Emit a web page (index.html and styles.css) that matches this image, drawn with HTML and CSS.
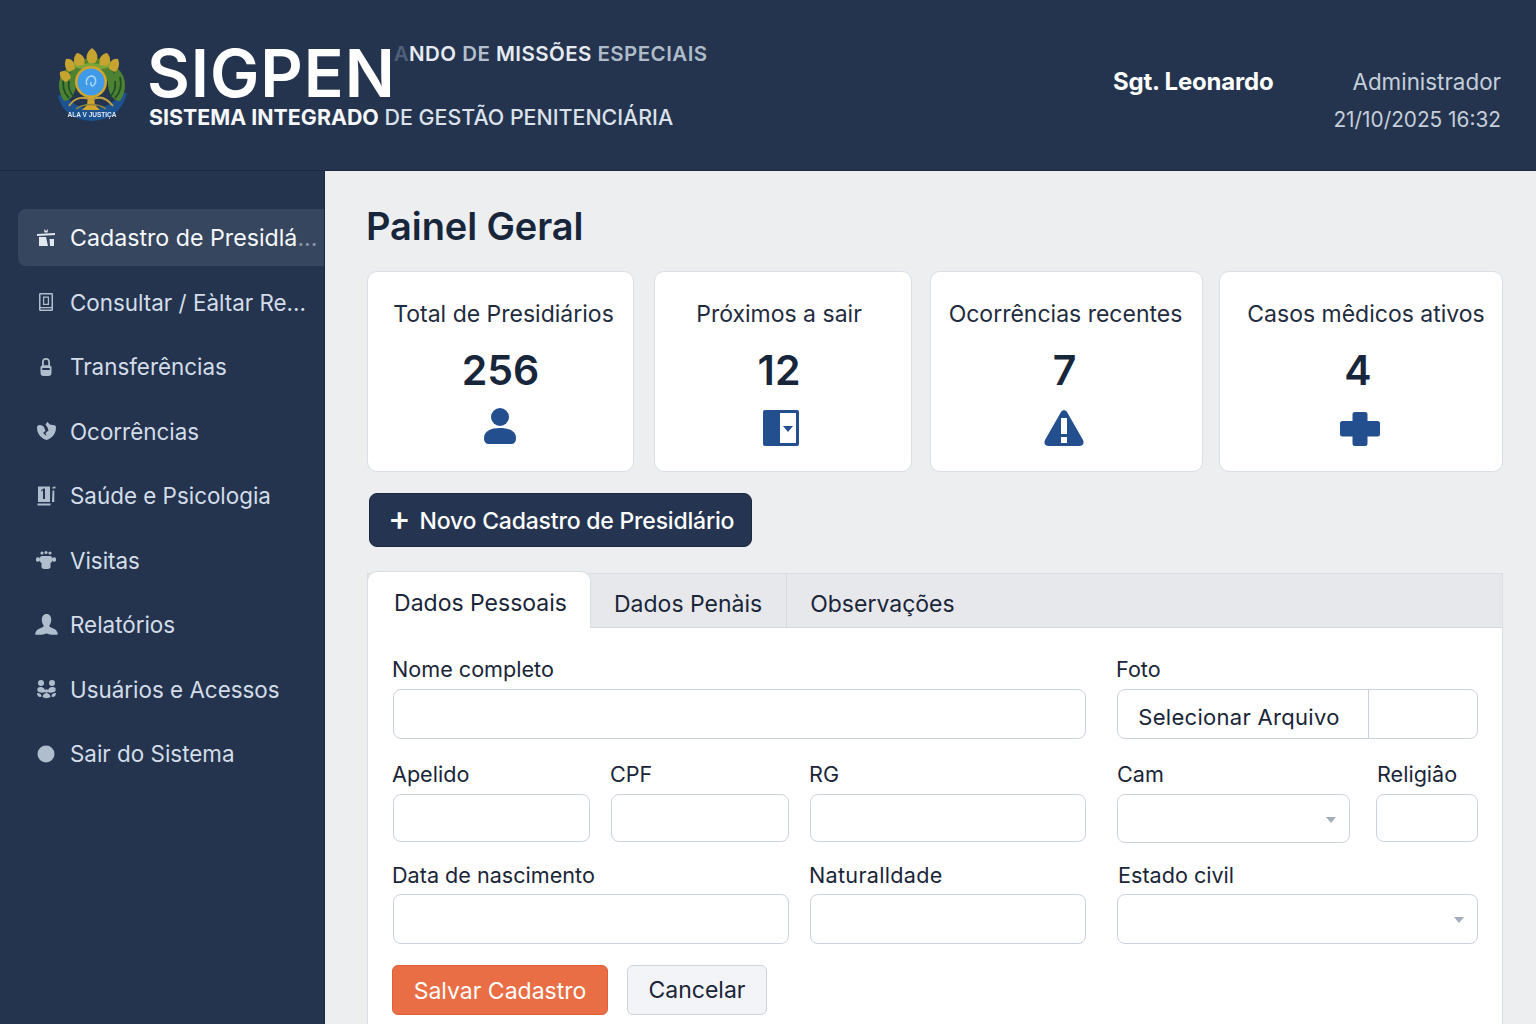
FILE: index.html
```html
<!DOCTYPE html>
<html lang="pt-BR">
<head>
<meta charset="utf-8">
<title>SIGPEN</title>
<link rel="stylesheet" href="styles.css">
</head>
<body>
<header class="topbar">
  <svg class="emblem" viewBox="0 0 72 76" aria-hidden="true">
    <path d="M2 49 C6 66 20 73 36 74 C52 73 66 66 71 46 L65 46 C58 57 48 61 36 61 C24 61 14 57 8 46 Z" fill="#1c5290"/>
    <g fill="#4d8233">
      <path d="M10 22 C1 30 1 44 8 54 C16 54 21 44 20 32 Z"/>
      <path d="M62 22 C71 30 71 44 64 54 C56 54 51 44 52 32 Z"/>
      <path d="M13 18 C22 9 50 9 59 18 L56 34 L16 34 Z"/>
    </g>
    <path d="M8 30 C6 38 8 46 13 51 M13 34 C12 40 14 46 18 50 M64 30 C66 38 64 46 59 51 M59 34 C60 40 58 46 54 50" stroke="#1f4f25" stroke-width="1.800" fill="none"/>
    <path d="M18 13 C24 17 29 18 34 15 C40 18 46 17 54 13 L56 19 C48 24 24 24 17 19 Z" fill="#7ea53a"/>
    <g fill="#c7a32f">
      <path d="M36 1 C42 5 43 12 39 16 L33 16 C29 12 30 5 36 1 Z"/>
      <path d="M21 6 C27 7 30 12 28 18 L21 19 C17 15 17 10 21 6 Z"/>
      <path d="M51 6 C45 7 42 12 44 18 L51 19 C55 15 55 10 51 6 Z"/>
      <path d="M10 12 C16 11 19 16 19 22 L13 25 C9 23 8 16 10 12 Z"/>
      <path d="M62 12 C56 11 53 16 53 22 L59 25 C63 23 64 16 62 12 Z"/>
      <path d="M4 25 C10 22 14 26 15 31 L10 35 C6 34 3 29 4 25 Z"/>
    </g>
    <circle cx="35" cy="35" r="16" fill="#d2a52b"/>
    <circle cx="35" cy="35" r="13.500" fill="#3f9bea"/>
    <path d="M31 38 C29 33 32 29 36 29 C40 30 41 35 38 38 C36 40 34 38 35 35" fill="none" stroke="#a9d5f7" stroke-width="1.500"/>
    <path d="M32 50 L38 50 L39 58 L44 63 L26 63 L31 58 Z" fill="#d2a52b"/>
    <path d="M13 59 C19 50 28 49 35 53 C42 49 50 50 57 59" stroke="#bfa041" stroke-width="2" fill="none"/>
    <path d="M20 62 C28 56 42 56 50 62" stroke="#8d8746" stroke-width="1.500" fill="none"/>
    <text class="emblem-motto" x="36" y="70" text-anchor="middle">ALA V JUSTIÇA</text>
  </svg>
  <div class="brand">
    <div class="brand-top">
      <h1 class="brand-name">SIGPEN</h1>
      <p class="brand-unit"><span class="unit-fade">A</span>NDO <span class="unit-mid">DE</span> MISSÕES <span class="unit-dim">ESPECIAIS</span></p>
    </div>
    <p class="brand-sub"><strong>SISTEMA INTEGRADO</strong> DE GESTÃO PENITENCIÁRIA</p>
  </div>
  <div class="user">
    <div class="user-row">
      <span class="user-name">Sgt. Leonardo</span>
      <span class="user-role">Administrador</span>
    </div>
    <div class="user-date">21/10/2025 16:32</div>
  </div>
</header>

<div class="shell">
  <nav class="sidebar">
    <a class="nav-item is-active">
      <svg class="nav-icon" viewBox="0 0 20 20"><path d="M1 6 L19 5 L19 7 L1 8 Z M8 1 L10 3 L12 1 L11.500 4.500 L8.500 4.500 Z M3 9 L10 9 L12 18 L3 18 Z M13.500 11 L18 11 L18 18 L14 18 Z"/></svg>
      <span>Cadastro de Presidlá<span class="nav-fade">...</span></span>
    </a>
    <a class="nav-item">
      <svg class="nav-icon" viewBox="0 0 20 20"><path fill-rule="evenodd" d="M4 1 H16 A1.500 1.500 0 0 1 17 2.500 V17.500 A1.500 1.500 0 0 1 16 19 H4 A1.500 1.500 0 0 1 3 17.500 V2.500 A1.500 1.500 0 0 1 4 1 Z M4.500 2.500 V15 H15.500 V2.500 Z M4.500 16.300 V17.500 H15.500 V16.300 Z M7 4.500 H13 V13 H7 Z M8.200 5.700 V11.800 H11.800 V5.700 Z"/></svg>
      <span>Consultar / Eàltar Re...</span>
    </a>
    <a class="nav-item">
      <svg class="nav-icon" viewBox="0 0 20 20"><path fill-rule="evenodd" d="M10 1 C12.800 1 14 2.800 14 5 V8.500 C15 9 15.500 9.500 15.500 10.500 V16 C15.500 17.800 14.300 19 12.500 19 H7.500 C5.700 19 4.500 17.800 4.500 16 V10.500 C4.500 9.500 5 9 6 8.500 V5 C6 2.800 7.200 1 10 1 Z M7.800 8.200 H12.200 V5 C12.200 3.500 11.400 2.700 10 2.700 C8.600 2.700 7.800 3.500 7.800 5 Z M6.300 11 V13 H13.700 V11 Z"/></svg>
      <span>Transferências</span>
    </a>
    <a class="nav-item">
      <svg class="nav-icon nav-icon-wide" viewBox="0 0 20 20"><path d="M10 19 C4 17 0.500 12.500 0.500 6.500 C0.500 5 1.500 4 3 4 C4.500 4 6 4.500 7.500 6 L9 10 L6.500 12 L10 15 L9 12 L12 9.500 L11 6.500 L9 3.500 L11 0.800 L13 3.300 C14.500 4 16 4 17 4 C18.500 4 19.500 5 19.500 6.500 C19.500 12.500 16 17 10 19 Z"/></svg>
      <span>Ocorrências</span>
    </a>
    <a class="nav-item">
      <svg class="nav-icon nav-icon-wide" viewBox="0 0 20 20"><path fill-rule="evenodd" d="M1.500 0.500 H13.500 V16 H1.500 Z M6.500 4 V13 H8.500 V2.500 H7 L4.500 4.300 L5.200 5.500 Z M1 17.500 H14 V19.500 H1 Z M16 1 L19 0.500 L19 2.200 L16 2.700 Z M16 4.500 H17.800 V16 H15.500 Z"/></svg>
      <span>Saúde e Psicologia</span>
    </a>
    <a class="nav-item">
      <svg class="nav-icon" viewBox="0 0 20 20"><path d="M6 6 H14 C15.500 6 16 7 16 8 V11 C16 12 15.500 12.500 14.500 13 V17 C14.500 18.500 13 19 10 19 C7 19 5.500 18.500 5.500 17 V13 C4.500 12.500 4 12 4 11 V8 C4 7 4.500 6 6 6 Z"/><circle cx="6" cy="3" r="1.600"/><circle cx="10" cy="2.500" r="1.600"/><circle cx="14" cy="3" r="1.600"/><circle cx="2" cy="9.500" r="2.200"/><circle cx="18" cy="9.500" r="2.200"/></svg>
      <span>Visitas</span>
    </a>
    <a class="nav-item">
      <svg class="nav-icon nav-icon-xl" viewBox="0 0 22 22"><path d="M11 1 C14 1 15.500 3.500 15.500 6.500 C15.500 9 14.500 11 13.500 12.500 C14.500 14 17 14.500 19 15.500 C20.500 16.300 21.500 18 22 20.500 C17 21.500 14 20.500 11 19.500 C8 20.500 5 21.500 0 20.500 C0.500 18 1.500 16.300 3 15.500 C5 14.500 7.500 14 8.500 12.500 C7.500 11 6.500 9 6.500 6.500 C6.500 3.500 8 1 11 1 Z"/></svg>
      <span>Relatórios</span>
    </a>
    <a class="nav-item">
      <svg class="nav-icon nav-icon-wide" viewBox="0 0 20 20"><circle cx="4.500" cy="4" r="3"/><circle cx="15.500" cy="4" r="3"/><path d="M1 9 C3 7.500 6 7.500 8 10 L9 13 C6.500 14 3 14 1 12 Z M19 9 C17 7.500 14 7.500 12 10 L11 13 C13.500 14 17 14 19 12 Z"/><circle cx="10" cy="12" r="1.800"/><path d="M6 18 C6.500 15 8.500 14 10 14 C11.500 14 13.500 15 14 18 C12 19.500 8 19.500 6 18 Z"/><path d="M0.500 14 C2 13.800 4 14.500 5 16 L4.500 18 C2.500 18.500 0.500 17 0.500 14 Z M19.500 14 C18 13.800 16 14.500 15 16 L15.500 18 C17.500 18.500 19.500 17 19.500 14 Z"/></svg>
      <span>Usuários e Acessos</span>
    </a>
    <a class="nav-item">
      <svg class="nav-icon" viewBox="0 0 20 20"><circle cx="10" cy="10" r="8.500"/></svg>
      <span>Sair do Sistema</span>
    </a>
  </nav>

  <main class="content">
    <h2 class="page-title">Painel Geral</h2>

    <section class="stats">
      <article class="stat stat-a">
        <h3 class="stat-title">Total de Presidiários</h3>
        <div class="stat-value">256</div>
        <svg class="stat-icon" viewBox="0 0 36 38"><circle cx="18" cy="10" r="9"/><path d="M2 31 C2 24 9 21 18 21 C27 21 34 24 34 31 C34 35 32 37 29 37 H7 C4 37 2 35 2 31 Z"/></svg>
      </article>
      <article class="stat stat-b">
        <h3 class="stat-title">Próximos a sair</h3>
        <div class="stat-value">12</div>
        <svg class="stat-icon" viewBox="0 0 36 36"><path fill-rule="evenodd" d="M2 0 H34 A2 2 0 0 1 36 2 V34 A2 2 0 0 1 34 36 H2 A2 2 0 0 1 0 34 V2 A2 2 0 0 1 2 0 Z M17 3 V33 H33 V3 Z"/><path d="M20 16 H30 L25 22 Z"/></svg>
      </article>
      <article class="stat stat-c">
        <h3 class="stat-title">Ocorrências recentes</h3>
        <div class="stat-value">7</div>
        <svg class="stat-icon stat-icon-wide" viewBox="0 0 40 36"><path fill-rule="evenodd" d="M17 2 C18.500 -0.500 21.500 -0.500 23 2 L39 30 C40.500 33 39 36 36 36 H4 C1 36 -0.500 33 1 30 Z M17 8 V24 H23 V8 Z M17 27 V33 H23 V27 Z"/></svg>
      </article>
      <article class="stat stat-d">
        <h3 class="stat-title">Casos mêdicos ativos</h3>
        <div class="stat-value">4</div>
        <svg class="stat-icon stat-icon-wide" viewBox="0 0 40 34"><path d="M15 0 H25 A2.500 2.500 0 0 1 27.500 2.500 V9 H37.500 A2.500 2.500 0 0 1 40 11.500 V22 A2.500 2.500 0 0 1 37.500 24.500 H27.500 V31.500 A2.500 2.500 0 0 1 25 34 H15 A2.500 2.500 0 0 1 12.500 31.500 V24.500 H2.500 A2.500 2.500 0 0 1 0 22 V11.500 A2.500 2.500 0 0 1 2.500 9 H12.500 V2.500 A2.500 2.500 0 0 1 15 0 Z"/></svg>
      </article>
    </section>

    <button class="btn-new" type="button"><span class="btn-plus">+</span>Novo Cadastro de Presidlário</button>

    <section class="panel">
      <div class="tabs">
        <button class="tab is-current" type="button">Dados Pessoais</button>
        <button class="tab" type="button">Dados Penàis</button>
        <button class="tab" type="button">Observações</button>
      </div>
      <form class="form">
        <div class="field f-nome"><label>Nome completo</label><input type="text"></div>
        <div class="field f-foto"><label>Foto</label><div class="file"><button class="file-btn" type="button">Selecionar Arquivo</button></div></div>
        <div class="field f-apelido"><label>Apelido</label><input type="text"></div>
        <div class="field f-cpf"><label>CPF</label><input type="text"></div>
        <div class="field f-rg"><label>RG</label><input type="text"></div>
        <div class="field f-cam"><label>Cam</label><div class="select"><select></select></div></div>
        <div class="field f-rel"><label>Religiâo</label><input type="text"></div>
        <div class="field f-data"><label>Data de nascimento</label><input type="text"></div>
        <div class="field f-nat"><label>Naturalldade</label><input type="text"></div>
        <div class="field f-civil"><label>Estado civil</label><div class="select"><select></select></div></div>
        <div class="actions">
          <button class="btn-save" type="button">Salvar Cadastro</button>
          <button class="btn-cancel" type="button">Cancelar</button>
        </div>
      </form>
    </section>
  </main>
</div>
</body>
</html>
```

FILE: styles.css
```css
* { box-sizing: border-box; }
html, body { margin: 0; height: 1024px; overflow: hidden; }
body { font-family: Inter, "Noto Sans", sans-serif; color: #1a2538; background: #eceef0; }
h1, h2, h3, p { margin: 0; }

.topbar {
  height: 171px;
  background: #24344f;
  border-bottom: 1px solid #1d2b42;
  display: flex;
  align-items: flex-start;
  padding: 47px 35px 0 56px;
  color: #fff;
}
.emblem { width: 72px; height: 76px; flex: none; filter: blur(.4px); }
.emblem-motto { font-family: "Liberation Sans", sans-serif; font-size: 6.500px; font-weight: 700; fill: #dfe8f2; }
.brand { margin-left: 21px; width: 560px; flex: none; }
.brand-top { display: flex; align-items: flex-start; height: 53px; }
.brand-name { font-size: 66px; line-height: 53px; font-weight: 600; letter-spacing: .9px; color: #fff; margin-left: -2px; }
.brand-unit { font-size: 20.500px; font-weight: 600; line-height: 24px; white-space: nowrap; color: #e6ebf1; margin: -5px 0 0 -2px; letter-spacing: .45px; }
.unit-fade { color: #4f5f78; }
.unit-mid { color: #b4c0cd; }
.unit-dim { color: #aebbc9; }
.brand-sub { font-size: 21.400px; line-height: 28px; font-weight: 500; color: #dbe2ea; margin-top: 3px; white-space: nowrap; }
.brand-sub strong { font-weight: 700; color: #f5f7fa; }
.user { margin-left: auto; display: flex; flex-direction: column; align-items: flex-end; padding-top: 20px; }
.user-row { display: flex; gap: 79px; align-items: baseline; line-height: 30px; }
.user-name { font-size: 24px; font-weight: 700; color: #fff; letter-spacing: -.2px; }
.user-role { font-size: 22.400px; color: #c5cfda; }
.user-date { font-size: 20.800px; line-height: 28px; margin-top: 9px; color: #c5cfda; }

.shell { display: flex; height: 853px; }
.sidebar {
  width: 325px;
  flex: none;
  background: #24344f;
  border-right: 1px solid #1b2a40;
  padding: 38px 0 0 18px;
  display: flex;
  flex-direction: column;
  gap: 7.500px;
}
.nav-item {
  height: 57px;
  flex: none;
  display: flex;
  align-items: center;
  padding-left: 18px;
  font-size: 22.400px;
  color: #d3dde8;
  white-space: nowrap;
  border-radius: 8px 0 0 8px;
}
.nav-item.is-active { background: #36465e; color: #f6f8fb; font-size: 23.200px; }
.nav-fade { color: #8a97a9; }
.nav-icon { width: 20px; height: 20px; flex: none; margin-right: 14px; fill: #afbecd; }
.nav-icon-wide { width: 21px; margin-right: 13px; }
.nav-icon-xl { width: 23px; height: 23px; margin-left: -1px; margin-right: 12px; }
.is-active .nav-icon { fill: #e2e8ef; }

.content { flex: 1; min-width: 0; padding: 0 33px 0 42px; overflow: hidden; background: #eceef0; }
.page-title { font-size: 38px; font-weight: 600; line-height: 48px; color: #18263c; margin: 31px 0 0 -1px; letter-spacing: -.1px; }

.stats { display: flex; margin-top: 21px; }
.stat {
  height: 201px;
  flex: none;
  background: #fff;
  border: 1px solid #dadee5;
  border-radius: 10px;
  display: flex;
  flex-direction: column;
  align-items: center;
  padding-top: 27px;
}
.stat-a { width: 267px; }
.stat-b { width: 258px; margin-left: 20px; }
.stat-c { width: 273px; margin-left: 18px; }
.stat-d { width: 284px; margin-left: 16px; }
.stat-title { font-size: 23px; line-height: 30px; font-weight: 400; color: #1f2b3e; white-space: nowrap; }
.stat-value { font-size: 41px; line-height: 50px; font-weight: 600; color: #18263c; margin-top: 16px; }
.stat-icon { width: 36px; height: 38px; fill: #234f8e; margin-top: 12px; }
.stat-icon-wide { width: 40px; height: 36px; }
.stat-a .stat-title { margin-left: 6px; }
.stat-a .stat-icon { margin-right: 2px; }
.stat-b .stat-title { margin-right: 8px; }
.stat-b .stat-value { margin-right: 8px; }
.stat-b .stat-icon { margin: 14px 4px 0 0; }
.stat-c .stat-title { margin-right: 2px; }
.stat-c .stat-value { margin-right: 4px; }
.stat-c .stat-icon { margin: 15px 5px 0 0; }
.stat-d .stat-title { margin-left: 10px; }
.stat-d .stat-value { margin-right: 6px; }
.stat-d .stat-icon { margin: 16px 2px 0 0; }

.btn-new {
  display: flex;
  align-items: center;
  width: 383px;
  height: 54px;
  margin: 21px 0 0 2px;
  padding: 2px 0 0 18px;
  background: #253551;
  border: 1px solid #1a2840;
  border-radius: 8px;
  color: #fff;
  font: 500 23px Inter, sans-serif;
  letter-spacing: -.2px;
}
.btn-plus { font-size: 34px; line-height: 1; font-weight: 500; margin: -6px 9px 0 0; }

.panel {
  margin-top: 26px;
  background: #fff;
  border: 1px solid #dadee5;
  border-bottom: 0;
  height: 460px;
}
.tabs {
  display: flex;
  height: 54px;
  background: #e6e8ec;
  border-bottom: 1px solid #d3d7de;
}
.tab {
  height: 53px;
  padding: 6px 24px 0 23px;
  background: transparent;
  border: 0;
  border-right: 1px solid #d6d9df;
  font: 400 23px Inter, sans-serif;
  color: #1a2538;
}
.tab:last-child { border-right: 0; }
.tab.is-current {
  background: #fff;
  height: 57px;
  margin: -3px 0 -1px -1px;
  width: 224px;
  padding: 6px 0 0 3px;
  border: 1px solid #dadee5;
  border-bottom: 0;
  border-radius: 10px 10px 0 0;
}
.form {
  display: grid;
  grid-template-columns: 197px 21px 178px 21px 276px 31px 233px 26px 102px;
  grid-template-rows: 87px 88px 87px;
  row-gap: 15px;
  padding: 24px 0 0 25px;
}
.field { display: flex; flex-direction: column; }
.field label { flex: 1; font-size: 21.600px; line-height: 36px; color: #1a2538; white-space: nowrap; margin-left: -1px; }
.f-nome label, .f-foto label { line-height: 34px; }
.f-apelido label, .f-cpf label, .f-rg label, .f-cam label, .f-rel label { line-height: 40px; }
.f-apelido label, .f-cpf label, .f-rg label, .f-data label, .f-nat label { margin-left: -1px; }
.f-cam label { margin-left: 0; }
.f-rel label { margin-left: 1px; }
.f-civil label { margin-left: 1px; }
.f-nat label { letter-spacing: .3px; }
.field input, .select select, .file {
  height: 50px;
  width: 100%;
  background: #fff;
  border: 1px solid #ccd2dc;
  border-radius: 8px;
  outline: 0;
  appearance: none;
  display: block;
}
.f-nome { grid-column: 1 / 6; grid-row: 1; }
.f-foto { grid-column: 7 / 10; grid-row: 1; }
.f-apelido { grid-column: 1; grid-row: 2; }
.f-cpf { grid-column: 3; grid-row: 2; }
.f-rg { grid-column: 5; grid-row: 2; }
.f-cam { grid-column: 7; grid-row: 2; }
.f-rel { grid-column: 9; grid-row: 2; }
.f-data { grid-column: 1 / 4; grid-row: 3; }
.f-nat { grid-column: 5; grid-row: 3; }
.f-civil { grid-column: 7 / 10; grid-row: 3; }
.f-apelido input, .f-cpf input, .f-rg input, .f-rel input, .f-cam select { height: 49px; }
.file { display: flex; }
.file-btn {
  width: 251px;
  height: 100%;
  padding: 5px 8px 0 0;
  background: transparent;
  border: 0;
  border-right: 1px solid #ccd2dc;
  font: 400 22px Inter, sans-serif;
  color: #1a2538;
  letter-spacing: .3px;
}
.select { position: relative; }
.select::after {
  content: "";
  position: absolute;
  right: 14px;
  top: 23px;
  border-left: 5.500px solid transparent;
  border-right: 5.500px solid transparent;
  border-top: 6px solid #a3adb9;
}
.actions { grid-column: 1 / 10; display: flex; gap: 19px; margin: 6px 0 0 -1px; }
.btn-save {
  width: 216px;
  height: 50px;
  padding-top: 2px;
  background: #e96d45;
  border: 1px solid #e25f35;
  border-radius: 6px;
  color: #fff;
  font: 400 23px Inter, sans-serif;
}
.btn-cancel {
  width: 140px;
  height: 50px;
  padding-top: 1px;
  background: #f3f4f7;
  border: 1px solid #cdd3dd;
  border-radius: 6px;
  color: #1a2538;
  font: 400 23px Inter, sans-serif;
}
```
